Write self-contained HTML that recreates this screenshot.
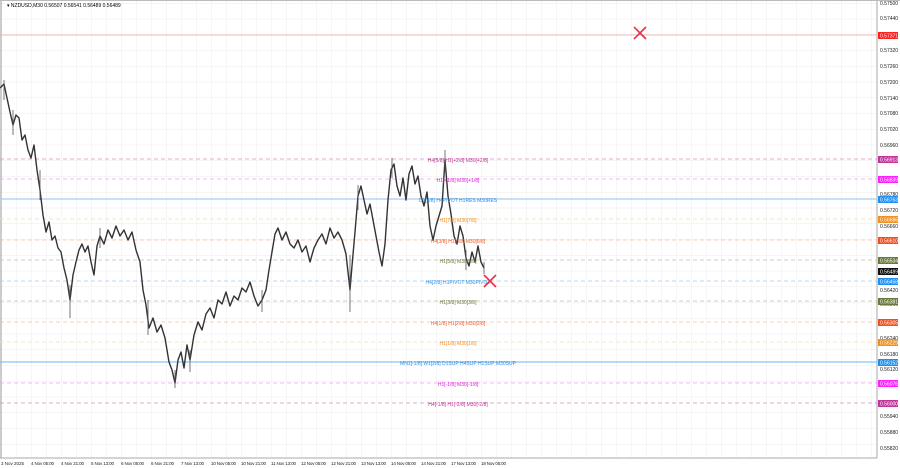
<!DOCTYPE html>
<html><head><meta charset="utf-8"><style>
html,body{margin:0;padding:0;background:#fff;width:900px;height:468px;overflow:hidden;font-family:"Liberation Sans",sans-serif}
</style></head><body>
<svg width="900" height="468" xmlns="http://www.w3.org/2000/svg" font-family="Liberation Sans, sans-serif">
<defs>
<pattern id="g" width="15" height="15.75" patternUnits="userSpaceOnUse" x="1" y="3">
<path d="M0 0V15.75M0 0H15" stroke="#ececec" stroke-width="1" fill="none"/>
</pattern>
</defs>
<rect x="0" y="0" width="877" height="458" fill="url(#g)"/>
<line x1="1" y1="0" x2="1" y2="458" stroke="#999"/>
<line x1="877" y1="0" x2="877" y2="458" stroke="#aaa"/>
<line x1="0" y1="458" x2="877" y2="458" stroke="#aaa"/>
<line x1="0" y1="0.5" x2="900" y2="0.5" stroke="#bbb"/>
<text x="7" y="7" font-size="5" fill="#000">▾  NZDUSD,M30  0.56507 0.56541 0.56489 0.56489</text>

<g stroke-width="0.8" fill="none">
<line x1="0" y1="35" x2="877" y2="35" stroke="#f4a0a0"/>
<line x1="0" y1="159" x2="877" y2="159" stroke="#e090c8" stroke-dasharray="4,3"/>
<line x1="0" y1="179" x2="877" y2="179" stroke="#f4a0f4" stroke-dasharray="4,3"/>
<line x1="0" y1="199" x2="877" y2="199" stroke="#a8ccf4" stroke-width="1.2"/>
<line x1="0" y1="219" x2="877" y2="219" stroke="#f8d8b0" stroke-dasharray="4,3"/>
<line x1="0" y1="240" x2="877" y2="240" stroke="#f8c0a8" stroke-dasharray="4,3"/>
<line x1="0" y1="260" x2="877" y2="260" stroke="#c0c0a8" stroke-dasharray="4,3"/>
<line x1="0" y1="281" x2="877" y2="281" stroke="#a8ccf4" stroke-dasharray="4,3"/>
<line x1="0" y1="301" x2="877" y2="301" stroke="#c0c0a8" stroke-dasharray="4,3"/>
<line x1="0" y1="322" x2="877" y2="322" stroke="#f8c0a8" stroke-dasharray="4,3"/>
<line x1="0" y1="342" x2="877" y2="342" stroke="#f8e0b8" stroke-dasharray="4,3"/>
<line x1="0" y1="362" x2="877" y2="362" stroke="#70b4f4" stroke-width="1"/>
<line x1="0" y1="383" x2="877" y2="383" stroke="#f4a0f4" stroke-dasharray="4,3"/>
<line x1="0" y1="403" x2="877" y2="403" stroke="#d090b8" stroke-dasharray="4,3"/>
</g>

<polyline fill="none" stroke="#333" stroke-width="1.4" stroke-linejoin="round" points="0,88 4,84 7,98 10,112 13,125 16,115 19,118 22,140 25,135 28,150 31,158 34,145 37,170 40,190 43,215 46,232 49,222 52,240 55,236 58,248 61,252 64,268 67,280 70,300 73,275 76,262 79,250 82,244 85,252 88,246 91,262 94,275 97,246 100,236 104,244 108,230 112,238 116,226 120,236 124,230 128,240 132,232 136,250 140,262 143,290 146,305 149,328 153,318 157,332 161,325 165,338 169,362 172,370 175,383 178,360 181,352 184,368 187,345 190,360 194,335 198,322 202,330 206,314 210,308 214,318 218,300 222,304 226,292 230,306 234,296 238,300 242,288 246,292 250,282 254,296 258,306 262,300 266,290 269,270 272,252 275,234 278,228 282,240 286,232 290,244 294,248 298,240 302,252 306,246 310,262 314,248 318,240 322,234 326,244 330,228 334,238 338,232 342,240 346,254 350,290 352,266 355,232 358,196 361,186 364,200 367,214 370,204 373,220 376,236 379,252 382,266 385,244 388,200 391,170 394,164 397,186 400,196 403,178 406,200 409,174 412,166 415,184 418,176 421,196 424,206 427,192 430,226 433,240 436,226 439,216 442,206 445,160 448,196 451,214 454,236 457,244 460,226 463,236 466,258 469,266 472,252 475,262 478,246 481,262 484,268"/>
<g stroke="#555" stroke-width="0.8">
<path d="M4 80V100M13 110V135M40 170V200M70 285V318M100 228V248M148 300V335M175 370V388M190 350V372M262 290V312M350 255V312M358 185V210M392 158V178M445 150V170M466 250V270M484 262V274"/>
</g>

<g font-size="5" text-anchor="middle">
<text x="458" y="162" fill="#c0359a">H4[5/8] H1[+2/8] M30[+2/8]</text>
<text x="458" y="182" fill="#e020e0">H1[+1/8] M30[+1/8]</text>
<text x="458" y="202" fill="#3090e0">D1[4/8] H4PIVOT H1RES M30RES</text>
<text x="458" y="222" fill="#f08c20">H1[7/8] M30[7/8]</text>
<text x="458" y="243" fill="#f05a28">H4[3/8] H1[6/8] M30[6/8]</text>
<text x="458" y="263" fill="#6a7a3a">H1[5/8] M30[5/8]</text>
<text x="458" y="284" fill="#3090e0">H4[2/8] H1PIVOT M30PIVOT</text>
<text x="458" y="304" fill="#6a7a3a">H1[3/8] M30[3/8]</text>
<text x="458" y="325" fill="#f05a28">H4[1/8] H1[2/8] M30[2/8]</text>
<text x="458" y="345" fill="#f08c20">H1[1/8] M30[1/8]</text>
<text x="458" y="365" fill="#3090e0">MN1[-1/8] W1[2/8] D1SUP H4SUP H1SUP M30SUP</text>
<text x="458" y="386" fill="#e020e0">H1[-1/8] M30[-1/8]</text>
<text x="458" y="406" fill="#c0359a">H4[-1/8] H1[-2/8] M30[-2/8]</text>
</g>

<g stroke="#e8304a" stroke-width="1.6">
<path d="M634 27L646 39M646 27L634 39"/>
<path d="M484 275L496 287M496 275L484 287"/>
</g>

<g font-size="5" fill="#222">
<text x="880" y="5">0.57500</text>
<text x="880" y="20">0.57440</text>
<text x="880" y="52">0.57320</text>
<text x="880" y="68">0.57260</text>
<text x="880" y="84">0.57200</text>
<text x="880" y="100">0.57140</text>
<text x="880" y="115">0.57080</text>
<text x="880" y="131">0.57020</text>
<text x="880" y="147">0.56960</text>
<text x="880" y="196">0.56780</text>
<text x="880" y="212">0.56720</text>
<text x="880" y="228">0.56660</text>
<text x="880" y="292">0.56420</text>
<text x="880" y="306">0.56360</text>
<text x="880" y="340">0.56240</text>
<text x="880" y="356">0.56180</text>
<text x="880" y="371">0.56120</text>
<text x="880" y="387">0.56060</text>
<text x="880" y="418">0.55940</text>
<text x="880" y="434">0.55880</text>
<text x="880" y="450">0.55820</text>
</g>
<g font-size="5" fill="#fff">
<rect x="878" y="32" width="20" height="7" fill="#ff2020"/><text x="880" y="37.5">0.57371</text>
<rect x="878" y="156" width="20" height="7" fill="#c0359a"/><text x="880" y="161.5">0.56913</text>
<rect x="878" y="176" width="20" height="7" fill="#ff20ff"/><text x="880" y="181.5">0.56839</text>
<rect x="878" y="196" width="20" height="7" fill="#2090f0"/><text x="880" y="201.5">0.56763</text>
<rect x="878" y="216" width="20" height="7" fill="#f09020"/><text x="880" y="221.5">0.56686</text>
<rect x="878" y="237" width="20" height="7" fill="#f05020"/><text x="880" y="242.5">0.56610</text>
<rect x="878" y="257" width="20" height="7" fill="#6a7a3a"/><text x="880" y="262.5">0.56534</text>
<rect x="878" y="268" width="20" height="7" fill="#111"/><text x="880" y="273.5">0.56489</text>
<rect x="878" y="278" width="20" height="7" fill="#2090f0"/><text x="880" y="283.5">0.56458</text>
<rect x="878" y="298" width="20" height="7" fill="#6a7a3a"/><text x="880" y="303.5">0.56381</text>
<rect x="878" y="319" width="20" height="7" fill="#f05020"/><text x="880" y="324.5">0.56305</text>
<rect x="878" y="339" width="20" height="7" fill="#f09020"/><text x="880" y="344.5">0.56229</text>
<rect x="878" y="359" width="20" height="7" fill="#2090f0"/><text x="880" y="364.5">0.56152</text>
<rect x="878" y="380" width="20" height="7" fill="#ff20ff"/><text x="880" y="385.5">0.56076</text>
<rect x="878" y="400" width="20" height="7" fill="#c0359a"/><text x="880" y="405.5">0.56000</text>
</g>

<g font-size="4.5" fill="#222">
<text x="1" y="465" textLength="23">3 Nov 2025</text>
<text x="31" y="465" textLength="23">4 Nov 05:00</text>
<text x="61" y="465" textLength="23">4 Nov 21:00</text>
<text x="91" y="465" textLength="23">5 Nov 13:00</text>
<text x="121" y="465" textLength="23">6 Nov 05:00</text>
<text x="151" y="465" textLength="23">6 Nov 21:00</text>
<text x="181" y="465" textLength="23">7 Nov 13:00</text>
<text x="211" y="465" textLength="25">10 Nov 05:00</text>
<text x="241" y="465" textLength="25">10 Nov 21:00</text>
<text x="271" y="465" textLength="25">11 Nov 13:00</text>
<text x="301" y="465" textLength="25">12 Nov 05:00</text>
<text x="331" y="465" textLength="25">12 Nov 21:00</text>
<text x="361" y="465" textLength="25">13 Nov 13:00</text>
<text x="391" y="465" textLength="25">14 Nov 05:00</text>
<text x="421" y="465" textLength="25">14 Nov 21:00</text>
<text x="451" y="465" textLength="25">17 Nov 13:00</text>
<text x="481" y="465" textLength="25">18 Nov 05:00</text>
</g>
</svg>
</body></html>
